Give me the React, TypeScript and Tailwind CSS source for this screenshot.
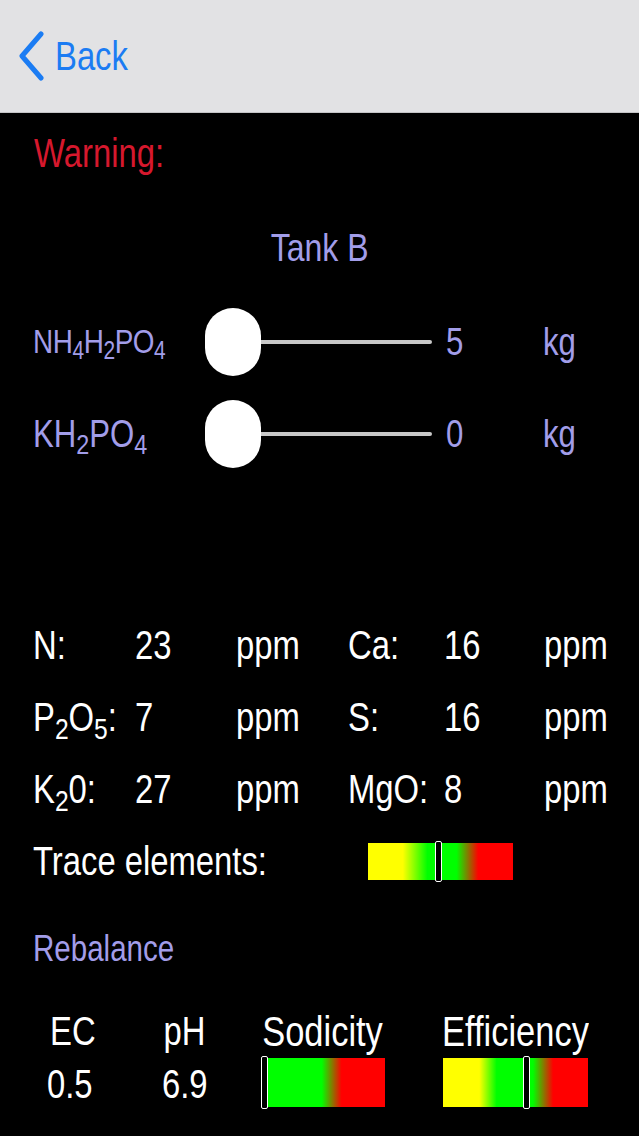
import React from "react";

type Stop = [string, number];

// the source app draws condensed text; squeeze Liberation Sans horizontally
const Narrow = ({ children, center }: { children: React.ReactNode; center?: boolean }) => (
  <span className={center ? "inline-block origin-center scale-x-[0.82]" : "inline-block origin-left scale-x-[0.82]"}>
    {children}
  </span>
);

const GradientBar = ({
  width,
  height,
  stops,
  marker,
}: {
  width: number;
  height: number;
  stops: Stop[];
  marker: number;
}) => {
  const bg = `linear-gradient(to right, ${stops.map(([c, p]) => `${c} ${p}%`).join(", ")})`;
  return (
    <div className="relative" style={{ width, height, background: bg }}>
      <div
        className="absolute -top-[2px] -bottom-[2px] w-[7px] rounded-[2px] border border-white bg-black"
        style={{ left: `${marker}%` }}
      />
    </div>
  );
};

const traceStops: Stop[] = [
  ["#ffff00", 0],
  ["#ffff00", 24],
  ["#00ff00", 41],
  ["#00ff00", 61],
  ["#ff0000", 76],
  ["#ff0000", 100],
];

const SliderRow = ({ label, value }: { label: React.ReactNode; value: string }) => (
  <div className="flex h-[70px] items-center pl-[33px] text-[#a29de9]">
    <div className="w-[172px]">{label}</div>
    <div className="flex w-[227px] items-center">
      <div className="h-[68px] w-[56px] shrink-0 rounded-full bg-white" />
      <div className="h-[4px] flex-1 rounded-r-full bg-[#c8c8c8]" />
    </div>
    <div className="ml-[14px] w-[97px] text-[38px] leading-none">
      <Narrow>{value}</Narrow>
    </div>
    <div className="text-[38px] leading-none">
      <Narrow>kg</Narrow>
    </div>
  </div>
);

const rows: [React.ReactNode, string, React.ReactNode, string][] = [
  ["N:", "23", "Ca:", "16"],
  [
    <>
      P<sub>2</sub>O<sub>5</sub>:
    </>,
    "7",
    "S:",
    "16",
  ],
  [
    <>
      K<sub>2</sub>0:
    </>,
    "27",
    "MgO:",
    "8",
  ],
];

export default function App() {
  return (
    <div className="min-h-[1136px] w-full bg-black font-['Liberation_Sans',Arial,sans-serif]">
      {/* Nav bar */}
      <div className="flex h-[113px] items-center border-b border-[#c4c4c6] bg-[#e2e2e4] pl-[17px]">
        <svg width="28" height="50" viewBox="0 0 28 50" fill="none">
          <path d="M24 3 L5 25 L24 47" stroke="#1b7cf3" strokeWidth="5" strokeLinecap="round" strokeLinejoin="round" />
        </svg>
        <span className="ml-[10px] text-[40px] leading-none text-[#1b7cf3]">
          <Narrow>Back</Narrow>
        </span>
      </div>

      <div className="mt-[20px] pl-[34px] text-[40px] leading-none text-[#d6182d]">
        <Narrow>Warning:</Narrow>
      </div>

      <div className="mt-[55px] text-center text-[39px] leading-none text-[#a29de9]">
        <Narrow center>Tank B</Narrow>
      </div>

      <div className="mt-[40px]">
        <SliderRow
          value="5"
          label={
            <span className="text-[34px] leading-none tracking-[-0.5px]">
              <Narrow>
                NH<sub>4</sub>H<sub>2</sub>PO<sub>4</sub>
              </Narrow>
            </span>
          }
        />
      </div>
      <div className="mt-[22px]">
        <SliderRow
          value="0"
          label={
            <span className="text-[38px] leading-none">
              <Narrow>
                KH<sub>2</sub>PO<sub>4</sub>
              </Narrow>
            </span>
          }
        />
      </div>

      {/* Nutrient table */}
      <div className="mt-[140px] pl-[33px] text-[40px] leading-none text-white">
        {rows.map(([l1, v1, l2, v2], i) => (
          <div key={i} className="grid h-[72px] grid-cols-[102px_101px_112px_96px_100px_auto] items-center">
            <div>
              <Narrow>{l1}</Narrow>
            </div>
            <div>
              <Narrow>{v1}</Narrow>
            </div>
            <div>
              <Narrow>ppm</Narrow>
            </div>
            <div>
              <Narrow>{l2}</Narrow>
            </div>
            <div>
              <Narrow>{v2}</Narrow>
            </div>
            <div>
              <Narrow>ppm</Narrow>
            </div>
          </div>
        ))}
        <div className="flex h-[72px] items-center">
          <div className="w-[335px]">
            <Narrow>Trace elements:</Narrow>
          </div>
          <GradientBar width={145} height={37} stops={traceStops} marker={46} />
        </div>
      </div>

      <div className="mt-[34px] pl-[33px] text-[36px] leading-none text-[#a29de9]">
        <Narrow>Rebalance</Narrow>
      </div>

      {/* Rebalance summary */}
      <div className="mt-[44px] flex pl-[30px] text-[40px] leading-none text-white">
        <div className="flex w-[80px] flex-col items-center">
          <div className="translate-x-[3px]">
            <Narrow center>EC</Narrow>
          </div>
          <div className="mt-[13px]">
            <Narrow center>0.5</Narrow>
          </div>
        </div>
        <div className="ml-[35px] flex w-[80px] flex-col items-center">
          <Narrow center>pH</Narrow>
          <div className="mt-[13px]">
            <Narrow center>6.9</Narrow>
          </div>
        </div>
        <div className="ml-[36px] flex w-[124px] flex-col items-center">
          <div className="text-[42px]">
            <Narrow center>Sodicity</Narrow>
          </div>
          <div className="mt-[5px]">
            <GradientBar
              width={124}
              height={49}
              marker={0}
              stops={[
                ["#00ff00", 0],
                ["#00ff00", 49],
                ["#ff0000", 65],
                ["#ff0000", 100],
              ]}
            />
          </div>
        </div>
        <div className="ml-[58px] flex w-[145px] flex-col items-center">
          <div className="text-[42px]">
            <Narrow center>Efficiency</Narrow>
          </div>
          <div className="mt-[5px]">
            <GradientBar
              width={145}
              height={49}
              marker={55}
              stops={[
                ["#ffff00", 0],
                ["#ffff00", 25],
                ["#00ff00", 37],
                ["#00ff00", 62],
                ["#ff0000", 76],
                ["#ff0000", 100],
              ]}
            />
          </div>
        </div>
      </div>
    </div>
  );
}
